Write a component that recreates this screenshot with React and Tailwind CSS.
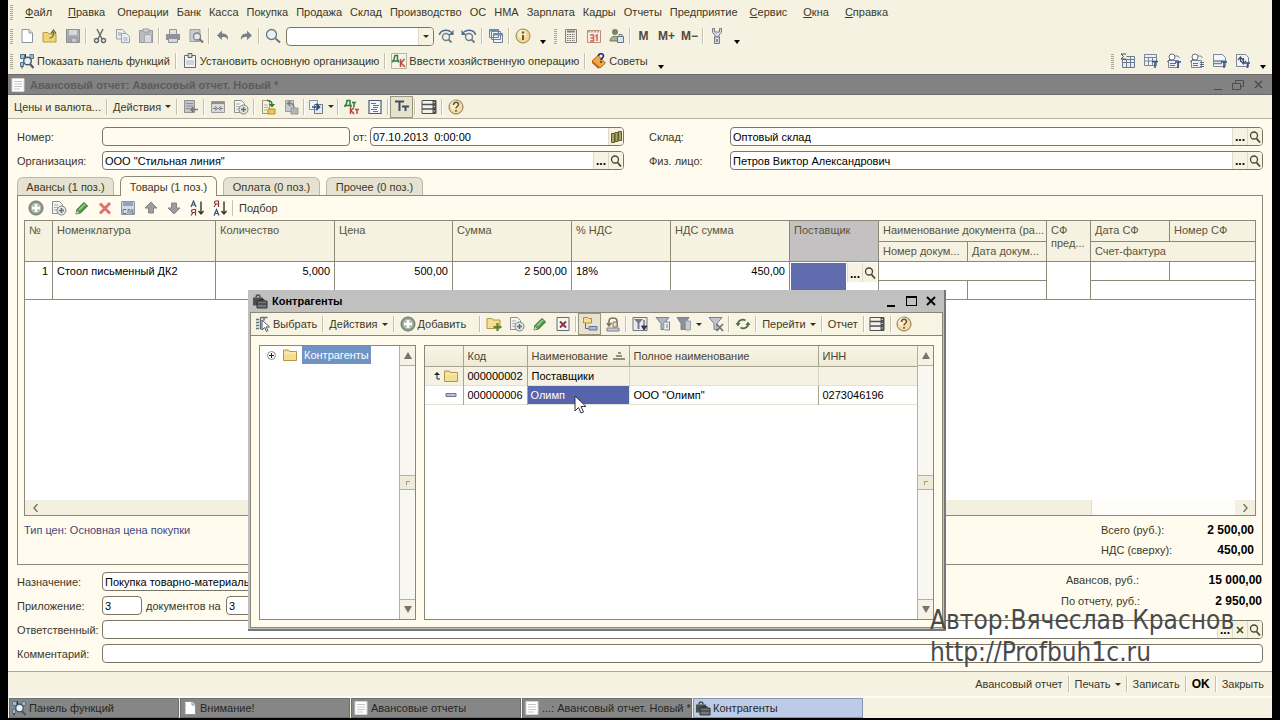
import clsx from "clsx";

const PAGE = "M3 1.5h7l3.5 3.5v9.5H3z";

/* 16x16 toolbar drawings */
const ICONS = {
  page: (
    <>
      <path d={PAGE} fill="#fff" stroke="#8a93a0" />
      <path d="M10 1.5V5h3.5" fill="#dfe6ee" stroke="#8a93a0" />
    </>
  ),
  open: (
    <>
      <path d="M1 4.5h5l1 1.5h7v8H1z" fill="#f0d67a" stroke="#c09a3c" />
      <path d="M7.5 10c3.500 0 4-2 4-6M9 5.500l2.500-3.500L14 5.500" fill="none" stroke="#6b6b30" strokeWidth="1.3" />
    </>
  ),
  save: (
    <>
      <path d="M1.5 1.5h13v13h-13z" fill="#a9adb3" stroke="#8d9197" />
      <path d="M4 2h8v5H4z" fill="#d6d8dc" />
      <path d="M4 10h8v4.500H4z" fill="#c3c6ca" stroke="#8d9197" />
      <path d="M6 11v3" stroke="#777" />
    </>
  ),
  cut: (
    <g fill="none" stroke="#62676f" strokeWidth="1.4">
      <path d="M5 1l5 10M11 1L6 11" />
      <circle cx="4.500" cy="12.500" r="2" />
      <circle cx="11.500" cy="12.500" r="2" />
    </g>
  ),
  copy: (
    <g fill="#eceef0" stroke="#9ba1a8">
      <path d="M1.500 1.500h6l2.500 2.500v7h-8.500z" />
      <path d="M6.500 5.500h5l3 3v6h-8z" />
      <path d="M3 5h3M3 7h3M8.500 10h4M8.500 12h4" />
    </g>
  ),
  paste: (
    <>
      <path d="M1.500 2.500h13v12h-13z" fill="#b9bcc0" stroke="#95999f" />
      <path d="M5 1h6v3H5z" fill="#d5d7da" stroke="#95999f" />
      <path d="M6.500 6.500h5l2 2v6h-7z" fill="#d9dbde" stroke="#a5a9ae" />
    </>
  ),
  print: (
    <>
      <path d="M4.500 1.500h7v5h-7z" fill="#e2e2e4" stroke="#90939a" />
      <path d="M1 6h14v6H1z" fill="#8f929a" />
      <path d="M3.500 10.500h9v4h-9z" fill="#d6d7da" stroke="#90939a" />
    </>
  ),
  preview: (
    <>
      <path d="M2 1.500h10v12H2z" fill="#c9ccd0" stroke="#9b9ea3" />
      <circle cx="9" cy="8.500" r="3.500" fill="#e4e6e8" stroke="#7d8188" strokeWidth="1.300" />
      <path d="M11.500 11l3.500 3.500" stroke="#6b6e74" strokeWidth="2" />
    </>
  ),
  undo: <path d="M2 7.500l5-5v3c5 0 6.500 2.500 6 6.500c-1-2.500-2.500-3-6-3v3z" fill="#7c8088" />,
  redo: <path d="M14 7.500l-5-5v3c-5 0-6.500 2.500-6 6.500c1-2.500 2.500-3 6-3v3z" fill="#7c8088" />,
  find: (
    <>
      <circle cx="6.500" cy="6.500" r="5" fill="#e9f0f6" stroke="#6f757c" strokeWidth="1.300" />
      <path d="M10.500 10.500l4.500 4" stroke="#6f757c" strokeWidth="2" />
    </>
  ),
  findNext: (
    <>
      <circle cx="8" cy="9" r="3.500" fill="#eef2f5" stroke="#777d85" strokeWidth="1.400" />
      <path d="M10.500 11.500l3 3" stroke="#777d85" strokeWidth="2" />
      <path d="M1.500 7C2 2.500 9 .5 13 4" fill="none" stroke="#4b6a8f" strokeWidth="1.500" />
      <path d="M15.500 2v5h-5z" fill="#4b6a8f" />
    </>
  ),
  findPrev: (
    <>
      <circle cx="8" cy="9" r="3.500" fill="#eef2f5" stroke="#777d85" strokeWidth="1.400" />
      <path d="M10.500 11.500l3 3" stroke="#777d85" strokeWidth="2" />
      <path d="M14.500 7C14 2.500 7 .5 3 4" fill="none" stroke="#4b6a8f" strokeWidth="1.500" />
      <path d="M.5 2v5h5z" fill="#4b6a8f" />
    </>
  ),
  windows: (
    <>
      <g fill="#eef3f8" stroke="#6d7f92">
        <path d="M1.500 1.500h9v8h-9zM3.500 3.500h9v8h-9zM5.500 5.500h9v9h-9z" />
      </g>
      <path d="M2 2.500h8M6 6.500h8" stroke="#6d8fb5" strokeWidth="2" />
    </>
  ),
  info: (
    <>
      <circle cx="8" cy="8" r="7" fill="#f4d795" stroke="#94835c" />
      <circle cx="7" cy="6" r="4" fill="#fbeecb" />
      <path d="M8 7v5" stroke="#6c5a2f" strokeWidth="2" />
      <circle cx="8" cy="4.500" r="1.200" fill="#6c5a2f" />
    </>
  ),
  help: (
    <>
      <circle cx="8" cy="8" r="7" fill="#f6dba5" stroke="#86764f" />
      <circle cx="7" cy="6" r="4.500" fill="#fbeed0" />
      <path d="M5.500 6c0-3.500 5-3.500 5-.5c0 2-2.500 2-2.500 4M8 11v1.800" fill="none" stroke="#655331" strokeWidth="1.600" />
    </>
  ),
  calc: (
    <>
      <path d="M2.500 1.500h11v13h-11z" fill="#f1efe4" stroke="#8b7e7a" />
      <path d="M4 3.500h8" stroke="#8b7e7a" strokeWidth="2" />
      <path d="M4 6.500h8M4 8.500h8M4 10.500h8M4 12.500h8" stroke="#77706c" strokeDasharray="1.500 1" />
    </>
  ),
  calendar: (
    <>
      <path d="M1.500 2.500h13v12h-13z" fill="#fbeee6" stroke="#b98d80" />
      <path d="M2 3.500h12" stroke="#c59b8c" strokeWidth="2" strokeDasharray="2 1" />
      <path d="M4 7h3.500v6H4M4.500 10h3M11 13V7L9.500 8.500" fill="none" stroke="#d0694f" strokeWidth="1.500" />
    </>
  ),
  userLock: (
    <>
      <circle cx="6" cy="4" r="3" fill="#7a8470" />
      <path d="M1 13c0-6 9-6 9-1v1z" fill="#a8b48d" stroke="#6c7859" />
      <path d="M8.500 8.500h6v6h-6z" fill="#dbe3ee" stroke="#647488" />
      <path d="M10 8.500v-2h3v2" fill="none" stroke="#647488" />
    </>
  ),
  wrench: (
    <g fill="#d6dae0" stroke="#747b86">
      <path d="M3.500 .5v4L6 7v2h4V7l2.500-2.500v-4H10.500V4h-5V.5z" />
      <path d="M5.500 9h5v6.500h-5z" />
      <path d="M8 11v3" stroke="#444" />
    </g>
  ),
  funcPanel: (
    <>
      <path d="M1.500 1.500h4v4h-4zM1.500 9.500h3v4h-3zM11 1.500h3.500v4H11z" fill="#9cc0dc" stroke="#4e7796" />
      <circle cx="8.500" cy="8" r="3.800" fill="#e7f1f8" stroke="#4c5a68" strokeWidth="1.400" />
      <path d="M11 11l3.500 4" stroke="#4c5a68" strokeWidth="2.200" />
      <path d="M3 15.500V13M6.500 4V1" stroke="#333" />
    </>
  ),
  org: (
    <>
      <path d="M2.500 2.500h11v12h-11z" fill="#f3f5f7" stroke="#5f6870" />
      <path d="M6 .5h4v4H6z" fill="#cdd4da" stroke="#5f6870" />
      <path d="M5 7v5M7 7v5M9 7v5M11 7v5" stroke="#aab2b9" />
    </>
  ),
  entry: (
    <>
      <path d="M.5 .5h15v15H.5z" fill="#f4f3ea" stroke="#b6b6aa" />
      <path d="M1.500 9.500V8H2.500L4 2.500h2.500V8h1v1.500M2.500 8h4" fill="none" stroke="#2f7b3a" strokeWidth="1.400" />
      <path d="M9.500 6v8M13.500 6L10 10l4 4" fill="none" stroke="#bf4a44" strokeWidth="1.500" />
    </>
  ),
  tips: (
    <>
      <path d="M1 8l6-5.500L14.500 10L9 15z" fill="#f0a640" stroke="#a9661d" />
      <path d="M1 8l2 1.500L9 15l-2 .5L1 10z" fill="#c55a28" />
      <path d="M7.500 3c0-3 5-3 5 0c0 2-2.500 2-2.500 4M10 8v1.800" fill="none" stroke="#2a2a8c" strokeWidth="1.700" />
    </>
  ),
  sumTable: (
    <>
      <path d="M2.500 6.500h12v8h-12zM6.500 3.500h8v3" fill="#e8edf3" stroke="#6b7a90" />
      <path d="M6.500 7v7M10.500 4v10M3 9.500h11" stroke="#6b7a90" />
      <path d="M6 1H1l2.500 2.500L1 6h5" fill="none" stroke="#3e4c63" />
    </>
  ),
  gridT: (
    <>
      <path d="M1.500 1.500h12v11h-12z" fill="#eef2f6" stroke="#7a8798" />
      <path d="M1.500 4.500h12M5.500 4.500v8M9.500 4.500v8M2 8h8" stroke="#7a8798" />
      <path d="M9 8.500h6M12 8.500V15" stroke="#34528a" strokeWidth="1.600" />
    </>
  ),
  glassT: (
    <>
      <path d="M2.500 7.500h10v7h-10zM8 3h4l1.500 2" fill="#eef2f6" stroke="#7a8798" />
      <circle cx="6" cy="4" r="3" fill="#fff" stroke="#66707e" />
      <path d="M4 6L1 9M4 10.500h6M4 12.500h5" stroke="#66707e" />
      <path d="M9 9h6M12 9v6" stroke="#34528a" strokeWidth="1.600" />
    </>
  ),
  glassList: (
    <>
      <path d="M2.500 7.500h10v7h-10zM8 3h4l1.500 2" fill="#eef2f6" stroke="#7a8798" />
      <circle cx="6" cy="4" r="3" fill="#fff" stroke="#66707e" />
      <path d="M4 6L1 9M4 10.500h5M4 12.500h5" stroke="#66707e" />
      <path d="M11 9.500h4M11 11.500h4M11 13.500h4" stroke="#5b6b80" />
    </>
  ),
  pageT: (
    <>
      <path d="M1.500 1.500h9l3 3v9h-12z" fill="#f4f6f8" stroke="#7a8798" />
      <path d="M2 8h11M2 10.500h8" stroke="#7a8798" strokeWidth="1.400" />
      <path d="M9 9h6M12 9v6" stroke="#34528a" strokeWidth="1.600" />
    </>
  ),
  swapT: (
    <>
      <path d="M1.500 1.500h9l3 3v9h-12z" fill="#f4f6f8" stroke="#7a8798" />
      <path d="M3 7l2.500-3L8 7M5.500 5v4M6 8l2.500 3L11 8M8.500 5v5" fill="none" stroke="#44506a" strokeWidth="1.200" />
      <path d="M10 10h5M12.500 10v5" stroke="#34528a" strokeWidth="1.600" />
    </>
  ),
  writeClose: (
    <>
      <path d="M1.500 1.500h10v12h-10z" fill="#c3c5c8" stroke="#8e9196" />
      <path d="M3 4.500h7M3 7h7M3 9.500h4" stroke="#8e9196" />
      <path d="M15 10.500H8M10.500 8L8 10.500L10.500 13" fill="none" stroke="#777" strokeWidth="1.700" />
    </>
  ),
  reread: (
    <>
      <path d="M1.500 2.500h13v11h-13z" fill="#d9dad9" stroke="#999b9b" />
      <path d="M2 4h12" stroke="#8c8f90" strokeWidth="2" />
      <path d="M3 9.500h3M10 9.500h3M5 7.500l2.500 2L5 11.500M11 7.500l-2.500 2 2.500 2" fill="none" stroke="#777a7c" />
    </>
  ),
  copyAdd: (
    <>
      <path d="M1.500 1.500h7l3 3v9h-10z" fill="#f3f4f3" stroke="#8a918e" />
      <path d="M3 5h4M3 7.500h4M3 10h3" stroke="#a9afac" />
      <circle cx="10.500" cy="10.500" r="4.500" fill="#dfe5df" stroke="#7b827d" />
      <path d="M10.500 8v5M8 10.500h5" stroke="#6a716c" strokeWidth="1.500" />
    </>
  ),
  post: (
    <>
      <path d="M2.500 1.500h7v13h-7z" fill="#f4f1df" stroke="#9a957e" />
      <path d="M4 6h4M4 8.500h4M4 11h3" stroke="#b5ae93" />
      <path d="M7 1.500c4 0 5 1.500 5 4" fill="none" stroke="#2f7b33" strokeWidth="1.500" />
      <path d="M9 5h6l-3 3.500z" fill="#2f7b33" />
      <path d="M8 10h7v5H8z" fill="#eec94a" stroke="#b5902c" />
    </>
  ),
  unpost: (
    <>
      <path d="M2.500 1.500h8v11h-8z" fill="#c8c9ca" stroke="#9b9da0" />
      <path d="M11 9C11 5 9 4 5 4.500M7.500 2L4.500 4.500L7.500 7" fill="none" stroke="#7b7d80" strokeWidth="1.400" />
      <path d="M8 9h7v6H8z" fill="#b4b5b6" stroke="#96989a" />
    </>
  ),
  basedOn: (
    <>
      <path d="M1.500 1.500h8v9h-8z" fill="#f3f5f7" stroke="#8791a0" />
      <path d="M6.500 5.500h8v9h-8z" fill="#e8edf3" stroke="#6c7a8e" />
      <path d="M4 8h6M8 5l3.500 3L8 11" fill="none" stroke="#2d4d80" strokeWidth="1.700" />
    </>
  ),
  dtkt: (
    <>
      <path d="M1 8V6.500h1L3 1.500h3v5h1V8M2 6.500h4M8 3.500h4M10 3.500V8" fill="none" stroke="#2f7b3a" strokeWidth="1.500" />
      <path d="M6.500 8v7M10 8.500L7 11.500l3 3.500M11 10.500h4M13 10.500V15" fill="none" stroke="#bf3f3a" strokeWidth="1.400" />
    </>
  ),
  listDoc: (
    <>
      <path d="M2 1.500h12v13H2z" fill="#f4f7fa" stroke="#4b5a70" strokeWidth="1.200" />
      <path d="M4 4.500h5M6 6.500h6M6 8.500h5M4 10.500h6M6 12.500h5" stroke="#5578a8" />
    </>
  ),
  textT: <path d="M1 2.500h9M5.500 2.500V12M8 7.500h7M11.500 7.500V12" fill="none" stroke="#3d4f60" strokeWidth="2" />,
  rows: (
    <>
      <path d="M1 1.500h14v13H1z" fill="#f2f2ee" stroke="#505050" />
      <path d="M1 5.500h14M1 10h14" stroke="#505050" strokeWidth="1.500" />
      <path d="M11.500 1.500h3.500v13h-3.500z" fill="#505050" />
      <path d="M12.500 3.500h1.500M12.500 7.500h1.500M12.500 12h1.500" stroke="#d5d5d0" />
    </>
  ),
  add: (
    <>
      <circle cx="8" cy="8" r="7" fill="#8d9c8c" stroke="#68766a" />
      <circle cx="8" cy="8" r="5" fill="#b3c0b0" />
      <path d="M8 4v8M4 8h8" stroke="#fff" strokeWidth="2.400" />
    </>
  ),
  pencil: (
    <>
      <path d="M3 9.500L10 2.500l3.500 3.500L6.500 13L2 14z" fill="#4f9a48" stroke="#2b6a2c" />
      <path d="M5 10l6-6" stroke="#a4d69c" strokeWidth="1.400" />
      <path d="M2 14l1-3.500 2.500 2.500z" fill="#e6d3a0" />
    </>
  ),
  cross: <path d="M3 3.500l10 10M13 3L3 13.500" stroke="#d9766e" strokeWidth="3" />,
  saveRow: (
    <>
      <path d="M1.500 1.500h13v13h-13z" fill="#d3dae2" stroke="#8796a8" />
      <path d="M3 2h10v4H3z" fill="#8fa5bd" />
      <path d="M3 9.500h3.500M3 9.500v4h3.500M8 13.500v-4h2v4M12 9v5M12 11.500l2-2M12 11.500l2 2.500" fill="none" stroke="#6e7884" />
    </>
  ),
  up: <path d="M8 2l6 6h-3.500v5h-5V8H2z" fill="#9a9c9d" stroke="#858788" />,
  down: <path d="M8 14l6-6h-3.500V3h-5v5H2z" fill="#9a9c9d" stroke="#858788" />,
  sortAsc: (
    <g fill="none" strokeWidth="1.200">
      <path d="M2 7l2.500-6L7 7M3 5h3" stroke="#35507f" />
      <path d="M6.500 15.500v-6H4c-2 0-2 3 0 3h2.500M4 12.500l-2 3" stroke="#8b3434" />
      <path d="M12 1.500v12M9.500 11l2.500 3 2.500-3" stroke="#333" strokeWidth="1.400" />
    </g>
  ),
  sortDesc: (
    <g fill="none" strokeWidth="1.200">
      <path d="M6.500 7V1H4C2 1 2 4 4 4h2.500M4 4L2 7" stroke="#8b3434" />
      <path d="M2 15.500l2.500-6 2.500 6M3 13.500h3" stroke="#35507f" />
      <path d="M12 1.500v12M9.500 11l2.500 3 2.500-3" stroke="#333" strokeWidth="1.400" />
    </g>
  ),
  choose: (
    <>
      <path d="M1 3.500h3M1 6.500h3M1 9.500h3M1 12.500h3M5.500 1.500h7M5.500 1.500v12M9 1.500v3" stroke="#62717f" strokeWidth="1.500" fill="none" />
      <path d="M7 4v10l2.500-2.500 2 4 1.500-1-2-3.500h3.500z" fill="#fff" stroke="#4b5560" />
    </>
  ),
  folder: (
    <>
      <path d="M1.500 3h5l1 1.500h7v9h-13z" fill="#f3df94" stroke="#b5954a" />
      <path d="M2 6h12" stroke="#fbf2cc" />
    </>
  ),
  folderAdd: (
    <>
      <path d="M1 2.500h5l1 1.500h7v8.500H1z" fill="#f3df94" stroke="#b5954a" />
      <path d="M11.500 7v8M7.500 11h8" stroke="#5d8434" strokeWidth="2.200" />
    </>
  ),
  markDelete: (
    <>
      <path d="M2 1.500h12v13H2z" fill="#f6f6f4" stroke="#667" />
      <path d="M5 5.500l6 6M11 5.500l-6 6" stroke="#8d2f3c" strokeWidth="1.900" />
    </>
  ),
  hierarchy: (
    <>
      <path d="M1.500 1.500h4l1 1h3v4.500h-8z" fill="#f3df94" stroke="#b08f44" />
      <path d="M3.500 7.500v5h3" stroke="#666" fill="none" />
      <path d="M7 10.500h8v3.500H7z" fill="#a9b9d6" stroke="#62749a" />
    </>
  ),
  moveGroup: (
    <>
      <path d="M4 9V5c0-4 8-4 8 0v6M2 7l2 3 2.500-3" fill="none" stroke="#80755a" strokeWidth="1.600" />
      <path d="M2 12h12v3H2z" fill="#c9ccd4" stroke="#7a8090" />
      <path d="M8 6h4v5H8z" fill="#e8e2c8" stroke="#80755a" />
    </>
  ),
  filterSet: (
    <>
      <path d="M1 1.500h14v13H1z" fill="#e9ebee" stroke="#6f757f" />
      <path d="M2 3h9L7.500 7v6H5.500V7z" fill="#747b87" />
      <path d="M12 4v7M9.500 10l2.500 4 3-4z" stroke="#343b46" fill="#343b46" />
    </>
  ),
  filterValue: (
    <>
      <path d="M1 1.500h13L9 7.500v6H6v-6z" fill="#b1b6be" stroke="#7c828d" />
      <path d="M9.500 6h5v8h-5M12 8v4" fill="#edf0f3" stroke="#75808d" />
    </>
  ),
  filterHistory: (
    <>
      <path d="M1 1.500h12L9 7.500v6H5v-6z" fill="#8b919b" stroke="#7c828d" />
      <path d="M9.500 5h5v9h-5z" fill="#c7cace" stroke="#9da1a8" />
    </>
  ),
  filterOff: (
    <>
      <path d="M1 1.500h13L9 7.500v6H6v-6z" fill="#c3c7cd" stroke="#7c828d" />
      <path d="M8.500 8l6.500 7M15 8l-6.500 7" stroke="#6b6f78" strokeWidth="1.700" />
    </>
  ),
  refresh: (
    <>
      <path d="M3 9C2 5 7 2.500 10.500 4.500M13 7c1 4-4 6.500-7.500 4.500" fill="none" stroke="#4e7046" strokeWidth="1.700" />
      <path d="M.5 7h5L3 10.500zM15.500 9h-5L13 5.500z" fill="#4e7046" />
    </>
  ),
  bag: (
    <>
      <path d="M1 4.500h10v8H1z" fill="#4b4f4f" />
      <path d="M4 4.500c0-3.500 4-3.500 4 0" fill="none" stroke="#4b4f4f" strokeWidth="1.500" />
      <path d="M5 8h10v7H5z" fill="#727776" stroke="#2e3131" />
      <path d="M8 8V6.500h4V8M5 11h10" fill="none" stroke="#2e3131" />
    </>
  ),
  pageLines: (
    <>
      <path d="M2 1.500h12v13H2z" fill="#fff" stroke="#d5d5d5" />
      <path d="M4 4.500h8M4 7h8M4 9.500h8M4 12h6" stroke="#c2c7cc" />
    </>
  ),
  item: <path d="M3 6.500h10v3H3z" fill="#b7c0dc" stroke="#6b7699" />,
  calendarPick: (
    <g fill="#a8a46a" stroke="#5d5b2c">
      <path d="M3.500 4.500h3v9h-3zM7 3.500h3v9H7zM10.500 2.500h3v9h-3z" />
    </g>
  ),
  glass: (
    <g fill="none" stroke="#4a4432">
      <circle cx="7" cy="6.500" r="3.500" strokeWidth="1.300" />
      <path d="M9.500 9.500l3.500 4" strokeWidth="1.800" />
    </g>
  ),
};

function Icon({ name }) {
  return (
    <svg width="16" height="16" viewBox="0 0 16 16" className="shrink-0" aria-hidden="true">
      {ICONS[name]}
    </svg>
  );
}

function Caret() {
  return <span className="block h-0 w-0 border-x-[3px] border-t-[3px] border-x-transparent border-t-[#33301f]" />;
}

function More() {
  return (
    <button type="button" aria-label="Ещё" className="flex h-4 w-[18px] items-end justify-center">
      <span className="h-0 w-0 border-x-[3px] border-t-[4px] border-x-transparent border-t-black" />
    </button>
  );
}

function Sep() {
  return <span className="mx-[1px] h-4 w-[2px] shrink-0 border-l border-[#c5c1ad] bg-white" />;
}

function Grip() {
  return <span className="mx-[2px] h-[15px] w-[3px] shrink-0 bg-[repeating-linear-gradient(#aba995_0_1px,transparent_1px_2px)]" />;
}

function Tool({ icon, pressed, caret }) {
  return (
    <button
      type="button"
      aria-label={icon}
      className={clsx(
        "flex h-[22px] shrink-0 items-center justify-center",
        caret ? "w-[30px] gap-1" : "w-[23px]",
        pressed && "border border-[#9b977f] bg-[#e6e2cd]"
      )}
    >
      <Icon name={icon} />
      {caret && <Caret />}
    </button>
  );
}

function TextTool({ icon, caret, bold, children }) {
  return (
    <button type="button" className={clsx("flex h-[22px] shrink-0 items-center whitespace-nowrap px-1", bold && "text-xs font-bold text-black")}>
      {icon && (
        <span className="mr-[2px]">
          <Icon name={icon} />
        </span>
      )}
      {children}
      {caret && (
        <span className="ml-1">
          <Caret />
        </span>
      )}
    </button>
  );
}

const MENU = [
  ["Ф", "айл"],
  ["П", "равка"],
  ["", "Операции"],
  ["", "Банк"],
  ["", "Касса"],
  ["", "Покупка"],
  ["", "Продажа"],
  ["", "Склад"],
  ["", "Производство"],
  ["", "ОС"],
  ["", "НМА"],
  ["", "Зарплата"],
  ["", "Кадры"],
  ["", "Отчеты"],
  ["", "Предприятие"],
  ["С", "ервис"],
  ["О", "кна"],
  ["С", "правка"],
];

function FieldButton({ label, children }) {
  return (
    <button type="button" aria-label={label} className="flex h-full w-[15px] shrink-0 items-center justify-center border-l border-[#dedac8] bg-[#f6f3e2] text-black">
      {children}
    </button>
  );
}

const Dots = () => <span className="self-end pb-[2px] text-xs font-bold leading-[11px]">...</span>;

function Field({ id, value = "", muted, buttons, className }) {
  return (
    <div className={clsx("flex h-[19px] min-w-0 overflow-hidden rounded-[4px] border border-[#7b7768]", muted ? "bg-[#fffbf0]" : "bg-white", className)}>
      <input id={id} defaultValue={value} className="min-w-0 flex-1 bg-transparent px-[2px] text-black outline-none" />
      {buttons}
    </div>
  );
}

const pickButtons = (
  <>
    <FieldButton label="..."><Dots /></FieldButton>
    <FieldButton label="Поиск"><Icon name="glass" /></FieldButton>
  </>
);

function Label({ htmlFor, className, children }) {
  return (
    <label htmlFor={htmlFor} className={clsx("shrink-0 whitespace-nowrap", className)}>
      {children}
    </label>
  );
}

function VScroll() {
  return (
    <div className="flex w-4 shrink-0 flex-col items-stretch border-l border-[#b5b19f] bg-[#f8f7f2]">
      <button type="button" aria-label="Вверх" className="flex h-5 items-center justify-center border-b border-[#b5b19f] bg-[#f6f3e6]">
        <span className="h-0 w-0 border-x-4 border-b-[7px] border-x-transparent border-b-[#77736a]" />
      </button>
      <div className="flex flex-1 items-center">
        <span className="flex h-[15px] w-full items-center justify-center border-y border-[#b5b19f] bg-[#efebda]">
          <span className="h-1 w-1 border-l border-t border-[#a09c88]" />
        </span>
      </div>
      <button type="button" aria-label="Вниз" className="flex h-5 items-center justify-center border-t border-[#b5b19f] bg-[#f6f3e6]">
        <span className="h-0 w-0 border-x-4 border-t-[7px] border-x-transparent border-t-[#77736a]" />
      </button>
    </div>
  );
}

const TABS = ["Авансы (1 поз.)", "Товары (1 поз.)", "Оплата (0 поз.)", "Прочее (0 поз.)"];

const TH = "border border-[#8d8978] pl-1 text-left align-top font-normal leading-[19px] whitespace-nowrap overflow-hidden";
const TD = "border border-[#8d8978] bg-white px-1 align-top leading-[18px] whitespace-nowrap";

function GoodsTable() {
  return (
    <table className="-ml-px w-[calc(100%+2px)] table-fixed border-collapse">
      <colgroup>
        <col className="w-[28px]" />
        <col className="w-[163px]" />
        <col className="w-[119px]" />
        <col className="w-[118px]" />
        <col className="w-[119px]" />
        <col className="w-[99px]" />
        <col className="w-[119px]" />
        <col className="w-[89px]" />
        <col className="w-[89px]" />
        <col className="w-[79px]" />
        <col className="w-[44px]" />
        <col className="w-[79px]" />
        <col />
      </colgroup>
      <thead className="bg-[#f5f2e2] text-[#5a543c]">
        <tr className="h-[21px]">
          <th rowSpan={2} className={TH}>№</th>
          <th rowSpan={2} className={TH}>Номенклатура</th>
          <th rowSpan={2} className={TH}>Количество</th>
          <th rowSpan={2} className={TH}>Цена</th>
          <th rowSpan={2} className={TH}>Сумма</th>
          <th rowSpan={2} className={TH}>% НДС</th>
          <th rowSpan={2} className={TH}>НДС сумма</th>
          <th rowSpan={2} className={clsx(TH, "bg-[#c3c1c1]")}>Поставщик</th>
          <th colSpan={2} className={TH}>Наименование документа (ра...</th>
          <th rowSpan={2} className={TH}>
            СФ
            <div className="-mt-[6px]">пред...</div>
          </th>
          <th className={TH}>Дата СФ</th>
          <th className={TH}>Номер СФ</th>
        </tr>
        <tr className="h-[20px]">
          <th className={TH}>Номер докум...</th>
          <th className={TH}>Дата докум...</th>
          <th colSpan={2} className={TH}>Счет-фактура</th>
        </tr>
      </thead>
      <tbody className="text-black">
        <tr className="h-[19px]">
          <td rowSpan={2} className={clsx(TD, "text-right")}>1</td>
          <td rowSpan={2} className={TD}>Стоол письменный ДК2</td>
          <td rowSpan={2} className={clsx(TD, "text-right")}>5,000</td>
          <td rowSpan={2} className={clsx(TD, "text-right")}>500,00</td>
          <td rowSpan={2} className={clsx(TD, "text-right")}>2 500,00</td>
          <td rowSpan={2} className={TD}>18%</td>
          <td rowSpan={2} className={clsx(TD, "text-right")}>450,00</td>
          <td rowSpan={2} className="border border-[#8d8978] bg-white p-px align-top">
            <div className="flex h-[34px]">
              <span className="flex-1 bg-[#5f6cae]" />
              <div className="ml-px flex h-[19px]">{pickButtons}</div>
            </div>
          </td>
          <td colSpan={2} className={TD} />
          <td rowSpan={2} className={TD} />
          <td className={TD} />
          <td className={TD} />
        </tr>
        <tr className="h-[19px]">
          <td className={TD} />
          <td className={TD} />
          <td colSpan={2} className={TD} />
        </tr>
      </tbody>
    </table>
  );
}

const CH = "border-b border-r border-[#a9a592] px-1 text-left font-normal";

function PickerWindow() {
  return (
    <section className="absolute left-[240px] top-[290px] flex h-[341px] w-[698px] flex-col border-b-2 border-r-2 border-[#777] bg-[#c1c0c0] pb-px pl-[2px] pr-px">
      <header className="flex h-[22px] shrink-0 items-center px-[2px] text-black">
        <Icon name="bag" />
        <h2 className="ml-1 flex-1 font-bold">Контрагенты</h2>
        <button type="button" aria-label="Свернуть" className="flex h-4 w-5 items-end justify-center pb-[2px]">
          <span className="h-[2px] w-[8px] bg-black" />
        </button>
        <button type="button" aria-label="Развернуть" className="flex h-4 w-5 items-center justify-center">
          <span className="h-[10px] w-[11px] border border-t-2 border-black" />
        </button>
        <button type="button" aria-label="Закрыть" className="flex h-4 w-5 items-center justify-center">
          <svg width="10" height="10" viewBox="0 0 10 10">
            <path d="M1 1l8 8M9 1L1 9" stroke="#000" strokeWidth="1.800" />
          </svg>
        </button>
      </header>
      <div className="flex h-6 shrink-0 items-center border border-[#8b8778] bg-[#f7f4e4]">
        <TextTool icon="choose">Выбрать</TextTool>
        <Sep />
        <TextTool caret>Действия</TextTool>
        <Sep />
        <TextTool icon="add">
          <span><u>Д</u>обавить</span>
        </TextTool>
        <span className="w-2" />
        <Sep />
        <Tool icon="folderAdd" />
        <Tool icon="copyAdd" />
        <Tool icon="pencil" />
        <Tool icon="markDelete" />
        <Sep />
        <Tool icon="hierarchy" pressed />
        <Tool icon="moveGroup" />
        <Sep />
        <Tool icon="filterSet" />
        <Tool icon="filterValue" />
        <Tool icon="filterHistory" caret />
        <Tool icon="filterOff" />
        <Sep />
        <Tool icon="refresh" />
        <Sep />
        <TextTool caret>Перейти</TextTool>
        <Sep />
        <TextTool>Отчет</TextTool>
        <Sep />
        <Tool icon="rows" />
        <Sep />
        <Tool icon="help" />
      </div>
      <div className="flex min-h-0 flex-1 gap-2 border-x border-b border-[#8b8778] bg-[#fffcee] px-2 pb-[7px] pt-[9px]">
        <div className="flex w-[157px] border border-[#8b8778] bg-white">
          <div className="flex flex-1 items-start pl-[2px]">
            <button type="button" aria-label="+" className="flex h-[18px] w-[18px] items-center justify-center">
              <svg width="9" height="9" viewBox="0 0 9 9">
                <circle cx="4.500" cy="4.500" r="4" fill="none" stroke="#8b8b8b" />
                <path d="M4.500 2v5M2 4.500h5" stroke="#222" />
              </svg>
            </button>
            <span className="ml-[2px] mt-px mr-1"><Icon name="folder" /></span>
            <span className="bg-[#6e93c4] px-[2px] leading-[18px] text-white">Контрагенты</span>
          </div>
          <VScroll />
        </div>
        <div className="flex flex-1 border border-[#8b8778] bg-white">
          <div className="flex-1">
            <table className="w-full table-fixed border-collapse text-black">
              <colgroup>
                <col className="w-[38px]" />
                <col className="w-[64px]" />
                <col className="w-[102px]" />
                <col className="w-[189px]" />
                <col />
              </colgroup>
              <thead className="bg-linear-to-b from-[#f8f5e8] to-[#efebd6] text-[#4a4532]">
                <tr className="h-5">
                  <th className={CH} />
                  <th className={CH}>Код</th>
                  <th className={CH}>
                    <span className="flex items-center justify-between">
                      Наименование
                      <svg width="12" height="8" viewBox="0 0 12 8">
                        <path d="M5 1h3M3 4h6M0 7h12" stroke="#77725c" strokeWidth="1.400" />
                      </svg>
                    </span>
                  </th>
                  <th className={CH}>Полное наименование</th>
                  <th className="border-b border-[#a9a592] px-1 text-left font-normal">ИНН</th>
                </tr>
              </thead>
              <tbody>
                <tr className="h-[19px] border-b border-[#e4e1d2] bg-[#f5f2e4]">
                  <td className="border-r border-[#a9a592]">
                    <span className="flex items-center justify-end gap-[3px] pr-1">
                      <svg width="6" height="8" viewBox="0 0 6 8">
                        <path d="M3 0l3 3H0z" fill="#222" />
                        <path d="M3 2v5h3" fill="none" stroke="#222" />
                      </svg>
                      <Icon name="folder" />
                    </span>
                  </td>
                  <td className="border-r border-[#a9a592] px-1">000000002</td>
                  <td className="border-r border-[#d8d4c2] px-1">Поставщики</td>
                  <td className="border-r border-[#d8d4c2] px-1" />
                  <td className="px-1" />
                </tr>
                <tr className="h-[19px] border-b border-[#e4e1d2]">
                  <td className="border-r border-[#a9a592]">
                    <span className="flex justify-end pr-1"><Icon name="item" /></span>
                  </td>
                  <td className="border-r border-[#a9a592] px-1">000000006</td>
                  <td className="border border-dotted border-[#c9cde6] bg-[#5564ab] px-[3px] text-white">Олимп</td>
                  <td className="border-r border-[#a9a592] px-1">ООО "Олимп"</td>
                  <td className="px-1">0273046196</td>
                </tr>
              </tbody>
            </table>
          </div>
          <VScroll />
        </div>
      </div>
    </section>
  );
}

const TASKS = [
  { icon: "funcPanel", title: "Панель функций" },
  { icon: "page", title: "Внимание!" },
  { icon: "pageLines", title: "Авансовые отчеты" },
  { icon: "pageLines", title: "...: Авансовый отчет. Новый *" },
  { icon: "bag", title: "Контрагенты", active: true },
];

export default function App() {
  return (
    <div className="min-h-screen bg-black pb-[2px] pl-2 pr-[8px] font-['Liberation_Sans',Arial,sans-serif] text-[11px] leading-4 text-[#3b3828]">
      <div className="relative flex min-h-[718px] flex-col bg-[#f5f2e1]">
        {/* Main menu */}
        <nav className="flex h-6 items-center">
          <Grip />
          <div className="flex items-center gap-2 pl-[6px]">
            {MENU.map(([key, rest]) => (
              <button key={key + rest} type="button" className={clsx("whitespace-nowrap", key && "px-1")}>
                {key && <u>{key}</u>}
                {rest}
              </button>
            ))}
          </div>
        </nav>

        {/* Standard toolbar */}
        <div className="flex h-6 items-center">
          <Grip />
          <Tool icon="page" />
          <Tool icon="open" />
          <Tool icon="save" />
          <Sep />
          <Tool icon="cut" />
          <Tool icon="copy" />
          <Tool icon="paste" />
          <Sep />
          <Tool icon="print" />
          <Tool icon="preview" />
          <Sep />
          <Tool icon="undo" />
          <Tool icon="redo" />
          <Sep />
          <Tool icon="find" />
          <div className="ml-[2px] flex h-[19px] w-[148px] overflow-hidden rounded-[4px] border border-[#7b7768] bg-white">
            <input aria-label="Поиск" className="min-w-0 flex-1 px-1 outline-none" />
            <FieldButton label="Список"><Caret /></FieldButton>
          </div>
          <Tool icon="findNext" />
          <Tool icon="findPrev" />
          <Sep />
          <Tool icon="windows" />
          <Sep />
          <Tool icon="info" />
          <More />
          <Grip />
          <Tool icon="calc" />
          <Tool icon="calendar" />
          <Tool icon="userLock" />
          <Sep />
          {["M", "M+", "M−"].map((m) => (
            <button key={m} type="button" className="w-[23px] text-xs font-bold text-[#55483c]">{m}</button>
          ))}
          <Sep />
          <Tool icon="wrench" />
          <More />
        </div>

        {/* Accounting toolbar */}
        <div className="flex h-[26px] items-center">
          <Grip />
          <TextTool icon="funcPanel">Показать панель функций</TextTool>
          <Sep />
          <TextTool icon="org">Установить основную организацию</TextTool>
          <Sep />
          <TextTool icon="entry">Ввести хозяйственную операцию</TextTool>
          <Sep />
          <TextTool icon="tips">Советы</TextTool>
          <More />
          <span className="flex-1" />
          <Grip />
          <Tool icon="sumTable" />
          <Tool icon="gridT" />
          <Tool icon="glassT" />
          <Tool icon="glassList" />
          <Tool icon="pageT" />
          <Tool icon="swapT" />
          <More />
        </div>

        {/* Document title bar */}
        <header className="flex h-[21px] items-center border-y border-[#6a6a6a] bg-[#828282] pl-[2px] pr-1 text-[#5c5c5c]">
          <Icon name="pageLines" />
          <h1 className="ml-1 flex-1 font-bold">Авансовый отчет: Авансовый отчет. Новый *</h1>
          <button type="button" aria-label="Свернуть" className="flex h-4 w-5 items-end justify-center pb-[3px]">
            <span className="h-px w-[8px] bg-[#4c4c4c]" />
          </button>
          <button type="button" aria-label="Восстановить" className="flex h-4 w-5 items-center justify-center">
            <svg width="12" height="10" viewBox="0 0 12 10">
              <path d="M.5 3.500h8v6h-8zM3.500 3V.5h8v6h-3" fill="none" stroke="#4c4c4c" />
            </svg>
          </button>
          <button type="button" aria-label="Закрыть" className="flex h-4 w-5 items-center justify-center">
            <svg width="9" height="9" viewBox="0 0 9 9">
              <path d="M1 1l7 7M8 1L1 8" stroke="#4c4c4c" strokeWidth="1.500" />
            </svg>
          </button>
        </header>

        {/* Document toolbar */}
        <div className="flex h-6 items-center border-b border-[#b4b09d] pl-[2px]">
          <TextTool>Цены и валюта...</TextTool>
          <Sep />
          <TextTool caret>Действия</TextTool>
          <Sep />
          <Tool icon="writeClose" />
          <Sep />
          <Tool icon="reread" />
          <Tool icon="copyAdd" />
          <Sep />
          <Tool icon="post" />
          <Tool icon="unpost" />
          <Sep />
          <Tool icon="basedOn" caret />
          <Sep />
          <Tool icon="dtkt" />
          <Tool icon="listDoc" />
          <Sep />
          <Tool icon="textT" pressed />
          <Sep />
          <Tool icon="rows" />
          <Sep />
          <Tool icon="help" />
        </div>

        {/* Document form */}
        <main className="flex flex-1 flex-col bg-[#fffbee] px-[9px] pb-2 pt-2">
          <div className="grid grid-cols-[607fr_614fr] gap-x-[25px] gap-y-[5px]">
            <div className="flex items-center">
              <Label htmlFor="number" className="w-[85px]">Номер:</Label>
              <Field id="number" muted className="w-[248px]" />
              <Label htmlFor="date" className="w-5 pl-[3px]">от:</Label>
              <Field
                id="date"
                value="07.10.2013  0:00:00"
                className="flex-1"
                buttons={<FieldButton label="Календарь"><Icon name="calendarPick" /></FieldButton>}
              />
            </div>
            <div className="flex items-center">
              <Label htmlFor="store" className="w-[81px]">Склад:</Label>
              <Field id="store" value="Оптовый склад" className="flex-1" buttons={pickButtons} />
            </div>
            <div className="flex items-center">
              <Label htmlFor="org" className="w-[85px]">Организация:</Label>
              <Field id="org" value={'ООО "Стильная линия"'} className="flex-1" buttons={pickButtons} />
            </div>
            <div className="flex items-center">
              <Label htmlFor="person" className="w-[81px]">Физ. лицо:</Label>
              <Field id="person" value="Петров Виктор Александрович" className="flex-1" buttons={pickButtons} />
            </div>
          </div>

          <div role="tablist" className="mt-[6px] flex h-[19px] items-end gap-[6px]">
            {TABS.map((tab, i) => (
              <button
                key={tab}
                type="button"
                role="tab"
                aria-selected={i === 1}
                className={clsx(
                  "relative w-[97px] whitespace-nowrap rounded-t-[6px] border border-b-0 text-center",
                  i === 1 ? "-mb-px h-5 border-[#8d8978] bg-[#fffbee]" : "h-[18px] border-[#bdb9a6] bg-[#e6e2d1]"
                )}
              >
                {tab}
              </button>
            ))}
          </div>

          <section className="flex flex-1 flex-col border border-[#8d8978] px-[6px]">
            <div className="flex h-6 items-center">
              <Tool icon="add" />
              <Tool icon="copyAdd" />
              <Tool icon="pencil" />
              <Tool icon="cross" />
              <Tool icon="saveRow" />
              <Tool icon="up" />
              <Tool icon="down" />
              <Tool icon="sortAsc" />
              <Tool icon="sortDesc" />
              <Sep />
              <TextTool>Подбор</TextTool>
            </div>
            <div className="flex flex-1 flex-col border border-t-0 border-[#8d8978] bg-white">
              <GoodsTable />
              <div className="flex-1" />
              <div className="flex h-[15px] bg-[#fdfcf8]">
                <button type="button" aria-label="Влево" className="flex w-5 items-center justify-center bg-[#f3f0e0]">
                  <svg width="5" height="8" viewBox="0 0 5 8"><path d="M4.500 0L1 4l3.500 4" fill="none" stroke="#77735f" strokeWidth="1.400" /></svg>
                </button>
                <div className="flex-1"><span className="block h-full w-[88%] border-r border-[#e0dcc9] bg-[#f3f0e0]" /></div>
                <button type="button" aria-label="Вправо" className="flex w-5 items-center justify-center bg-[#f3f0e0]">
                  <svg width="5" height="8" viewBox="0 0 5 8"><path d="M.5 0L4 4L.5 8" fill="none" stroke="#77735f" strokeWidth="1.400" /></svg>
                </button>
              </div>
            </div>
            <div className="flex h-12 justify-between pt-[6px]">
              <p className="text-[#44487e]">Тип цен: Основная цена покупки</p>
              <dl className="grid w-[155px] grid-cols-2 content-start gap-y-1 pr-[2px]">
                <dt className="whitespace-nowrap">Всего (руб.):</dt>
                <dd className="text-right text-xs leading-4 font-bold text-black">2 500,00</dd>
                <dt className="whitespace-nowrap">НДС (сверху):</dt>
                <dd className="text-right text-xs leading-4 font-bold text-black">450,00</dd>
              </dl>
            </div>
          </section>

          <div className="mt-[7px] flex justify-between">
            <div className="flex w-[607px] flex-col gap-[5px]">
              <div className="flex items-center">
                <Label htmlFor="purpose" className="w-[85px]">Назначение:</Label>
                <Field id="purpose" value="Покупка товарно-материальных ценностей" className="flex-1" />
              </div>
              <div className="flex items-center">
                <Label htmlFor="docs" className="w-[85px]">Приложение:</Label>
                <Field id="docs" value="3" className="w-10" />
                <Label htmlFor="sheets" className="w-[84px] pl-1">документов на</Label>
                <Field id="sheets" value="3" className="w-10" />
                <span className="pl-1">листах</span>
              </div>
            </div>
            <dl className="grid w-[202px] grid-cols-[78px_1fr] content-start gap-y-[5px] pr-px text-right">
              <dt className="whitespace-nowrap">Авансов, руб.:</dt>
              <dd className="text-xs leading-4 font-bold text-black">15 000,00</dd>
              <dt className="whitespace-nowrap">По отчету, руб.:</dt>
              <dd className="text-xs leading-4 font-bold text-black">2 950,00</dd>
            </dl>
          </div>
          <div className="mt-[5px] flex items-center">
            <Label htmlFor="owner" className="w-[85px]">Ответственный:</Label>
            <Field
              id="owner"
              className="flex-1"
              buttons={
                <>
                  <FieldButton label="..."><Dots /></FieldButton>
                  <FieldButton label="Очистить">
                    <svg width="8" height="8" viewBox="0 0 8 8"><path d="M1 1l6 6M7 1L1 7" stroke="#4a4a1c" strokeWidth="1.600" /></svg>
                  </FieldButton>
                  <FieldButton label="Поиск"><Icon name="glass" /></FieldButton>
                </>
              }
            />
          </div>
          <div className="mt-[5px] flex items-center">
            <Label htmlFor="comment" className="w-[85px]">Комментарий:</Label>
            <Field id="comment" className="flex-1" />
          </div>
        </main>

        {/* Document actions */}
        <footer className="flex h-[25px] items-center justify-end border-t border-[#a9a592] pr-1">
          <TextTool>Авансовый отчет</TextTool>
          <Sep />
          <TextTool caret>Печать</TextTool>
          <Sep />
          <TextTool>Записать</TextTool>
          <Sep />
          <TextTool bold>OK</TextTool>
          <Sep />
          <TextTool>Закрыть</TextTool>
        </footer>

        {/* Open windows */}
        <div className="flex h-[22px] gap-px border-t-2 border-[#fbfaf4] pl-px">
          {TASKS.map((task) => (
            <button
              key={task.title}
              type="button"
              className={clsx(
                "flex w-[170px] items-center gap-[2px] border pl-px text-left text-[#26261f]",
                task.active ? "border-[#8593ae] bg-[#bccbe6]" : "border-[#6f6f6f] bg-[#868686]"
              )}
            >
              <Icon name={task.icon} />
              {task.title}
            </button>
          ))}
        </div>

        <PickerWindow />

        {/* Mouse pointer */}
        <svg width="13" height="20" viewBox="0 0 13 20" className="pointer-events-none absolute left-[566px] top-[395px]">
          <path d="M1 1v15l3.500-3.500L7 18l2.500-1L7 11.500h5z" fill="#fff" stroke="#333" />
        </svg>

        {/* Author caption */}
        <div className="pointer-events-none absolute left-[922px] top-[604px] whitespace-nowrap font-['DejaVu_Sans_Condensed','DejaVu_Sans',sans-serif] text-[26px] leading-8 text-[#4a4a4a]">
          <p>Автор:Вячеслав Краснов</p>
          <p>http://Profbuh1c.ru</p>
        </div>
      </div>
    </div>
  );
}
